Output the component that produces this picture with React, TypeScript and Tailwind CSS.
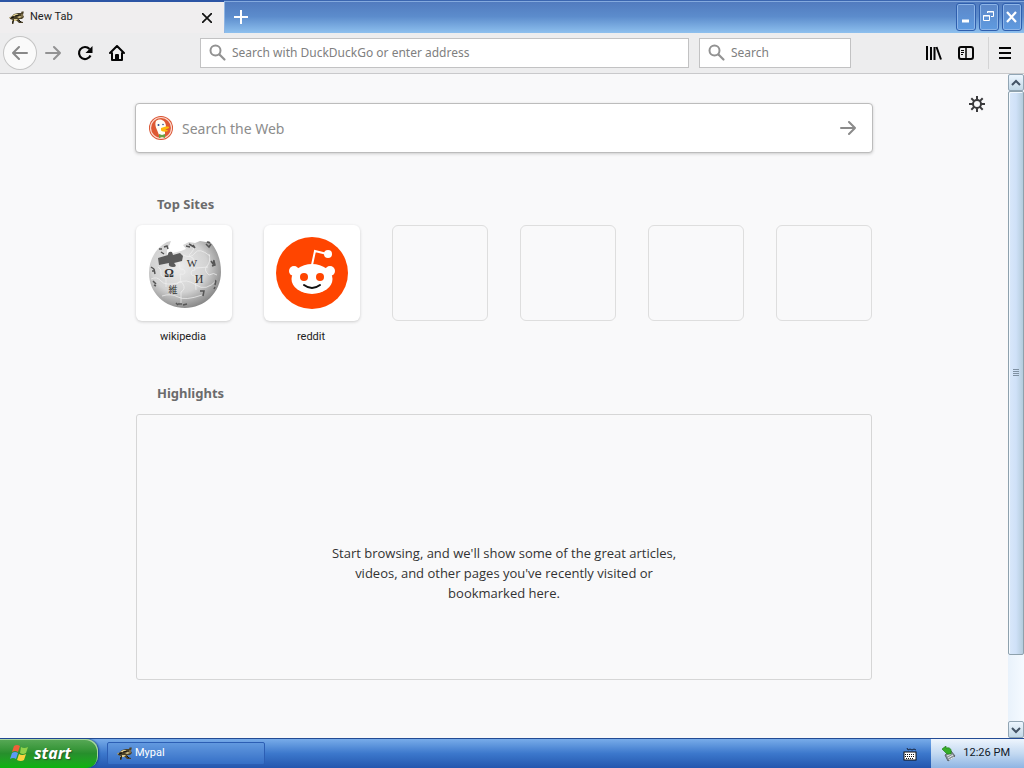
import type { ReactNode } from 'react'

const emptySites = [1, 2, 3, 4]

function RaccoonIcon() {
  return (
    <svg width="16" height="16" viewBox="0 0 16 16" aria-hidden="true">
      <path d="M1 8l2-2 2-2 4-1 3 0 1-2 1 1 1-1-1 4 1 2-2 2-3 0 1 2 3 1v1h-4l-2-2-3 0-1 2 1 1H3l0-2 1-2-3-1z" fill="#4b4128" />
      <path d="M3 6l3-2 4 0-3 2zM8 7l3-1 2 1-3 1zM5 9l4 0-2 2-2 0z" fill="#dccb8e" />
      <path d="M2 8l3-1M6 6l4-1M4 10l0 3M10 10l2 2" stroke="#12100c" fill="none" />
      <path d="M0 8l2-1M13 4v3M3 10l1 1" stroke="#a99867" fill="none" />
    </svg>
  )
}

function SearchIcon() {
  return (
    <svg width="18" height="18" viewBox="0 0 18 18" fill="none" stroke="#929292" aria-hidden="true">
      <circle cx="6.500" cy="6.500" r="5" strokeWidth="2" />
      <path d="M10.500 10.500l5 5" strokeWidth="2.200" strokeLinecap="round" />
    </svg>
  )
}

function DuckIcon() {
  return (
    <svg width="24" height="24" viewBox="0 0 24 24" aria-hidden="true">
      <circle cx="12" cy="12" r="12" fill="#d9512f" />
      <circle cx="12" cy="12" r="10.5" fill="#de5833" stroke="#fbd9cf" strokeWidth="1.2" />
      <path d="M7 5c1-1 4-2 6-1 3 1 4 4 4 7l-1 3 0 7c-2 1-4 1-5 .5L8 14C6 10 6 7 7 5z" fill="#fffdf5" />
      <path d="M12 12c3-1 6-2 8-1 1 1-3 2-4 3 2 0 3 0 3 1-2 1-7 1-7-1z" fill="#fdb90b" />
      <path d="M10 18l3 1 3-1v4l-3-1-3 1z" fill="#67a044" />
      <circle cx="9.500" cy="9" r="1" fill="#2d4f8e" />
      <circle cx="14" cy="8.500" r=".8" fill="#2d4f8e" />
    </svg>
  )
}

function WikipediaIcon() {
  return (
    <svg width="76" height="76" viewBox="0 0 76 76" aria-hidden="true">
      <defs>
        <radialGradient id="globe" cx="42%" cy="38%" r="65%">
          <stop offset="0" stopColor="#ececec" />
          <stop offset=".6" stopColor="#d2d2d2" />
          <stop offset="1" stopColor="#848484" />
        </radialGradient>
      </defs>
      <path d="M21 7l4-1-2 5-2 4 0 4 6-1 8-2 5-2-3-4 6-3 6 1 5-2 6 1 3-1 3 3c6 8 9 17 9 28C75 58 58 73 39 73 19 73 3 58 3 38 3 26 9 13 21 7z" fill="url(#globe)" />
      <path d="M12 23l10-3q0-4 4-3l1 3 7-2 3 3-1 5-8 2q4 4-1 4t-4-4l-10 2z" fill="#5b5b5b" />
      <path
        d="M12 32q4 2 3 6t5 5v9M33 27l1 7q5 0 5 3t-5 2l1 9M31 49q3-5 6 0t-2 8v13M47 10q2 5-2 8t2 5l2 12q-4 0-4 3t4 3l1 14M5 44q6-3 10 2t17 2q8-5 18 2t21-5M37 20q8 4 12-2t15 3M16 61q9-3 16 1t24-2M63 19q2 8-2 12t2 9q5-3 8 0M50 33l12-1"
        fill="none"
        stroke="#f0f0f0"
        strokeWidth=".7"
      />
      <g fill="#333" fontFamily="'Liberation Serif', 'Noto Sans CJK JP', serif" textAnchor="middle">
        <text x="23" y="42" fontSize="12" fontWeight="bold">Ω</text>
        <text x="46" y="32" fontSize="11">W</text>
        <text x="53" y="48" fontSize="12">И</text>
        <text x="27" y="58" fontSize="9">維</text>
      </g>
      <path
        d="M54 56l4 0-1 5M65 26l2 3 1-4M68 26l1 4-3 1M18 12l3-1 1 3M15 17l3 2M13 14l3 0M40 11l4 1M43 9l5 3M47 10l2 3M60 9l3 3 2-3M61 7l3 1M5 32l3 2M6 36l3 0M8 34l1 5M7 46l3 3M8 50l2 1M30 68l2 2M32 69h4M37 70l4-1M70 45l-1 5M69 52l-1 2"
        fill="none"
        stroke="#555"
        strokeWidth="1.500"
      />
    </svg>
  )
}

function RedditIcon() {
  return (
    <svg width="72" height="72" viewBox="0 0 72 72" aria-hidden="true">
      <circle cx="36" cy="36" r="36" fill="#ff4500" />
      <path d="M36 28l3-14 12 3" fill="none" stroke="#fff" strokeWidth="2" />
      <circle cx="52" cy="17" r="4" fill="#fff" />
      <circle cx="18" cy="34" r="5" fill="#fff" />
      <circle cx="54" cy="34" r="5" fill="#fff" />
      <ellipse cx="36" cy="42" rx="20.5" ry="15" fill="#fff" />
      <circle cx="28" cy="40" r="4" fill="#ff4500" />
      <circle cx="44" cy="40" r="4" fill="#ff4500" />
      <path d="M28 48q8 6 16 0" fill="none" stroke="#111" strokeWidth="2" strokeLinecap="round" />
    </svg>
  )
}

function GearIcon() {
  return (
    <svg width="16" height="16" viewBox="0 0 16 16" fill="none" stroke="#3a3a3c" aria-hidden="true">
      <circle cx="8" cy="8" r="4" strokeWidth="2" />
      <path d="M8 0v4M8 12v4M0 8h4M12 8h4M2.3 2.3l2.6 2.6M11.1 11.1l2.6 2.6M13.7 2.3l-2.6 2.6M4.9 11.1l-2.6 2.6" strokeWidth="2" />
    </svg>
  )
}

function ToolButton({ label, children }: { label: string; children: ReactNode }) {
  return (
    <button aria-label={label} className="flex size-8 shrink-0 items-center justify-center">
      {children}
    </button>
  )
}

function WindowButton({ label, children }: { label: string; children: ReactNode }) {
  return (
    <button
      aria-label={label}
      className="flex h-7 w-5 items-center justify-center rounded-[3px] border border-[#2f5fae] bg-linear-to-b from-[#5c87c8] to-[#5f9be0] shadow-[inset_0_0_0_1px_#8db5e8]"
    >
      <svg width="16" height="16" viewBox="0 0 16 16" fill="none" stroke="#fff" aria-hidden="true">
        {children}
      </svg>
    </button>
  )
}

function TitleBar() {
  return (
    <header className="flex h-[33px] shrink-0 bg-linear-to-b from-[#5079bd] via-[#5c8ccc] to-[#8ec0ee]">
      <div className="mt-[2px] flex w-56 shrink-0 items-center bg-[#f0eeef] pr-[9px] pl-[9px] shadow-[0_-2px_#2c55a5]">
        <RaccoonIcon />
        <span className="ml-[5px] flex-1 font-['Roboto',sans-serif] text-[11px] text-[#222]">New Tab</span>
        <button aria-label="Close tab" className="flex size-4 items-center justify-center">
          <svg width="10" height="10" viewBox="0 0 10 10" stroke="#111" strokeWidth="1.7" aria-hidden="true">
            <path d="M0 0l10 10M10 0L0 10" />
          </svg>
        </button>
      </div>
      <div className="flex flex-1 items-center justify-between border-t border-[#3b66b0] shadow-[inset_0_1px_#84aade]">
        <button aria-label="New tab" className="flex h-8 w-8 items-center justify-center border-l border-[#8fb4e2]">
          <svg width="14" height="14" viewBox="0 0 14 14" stroke="#fff" strokeWidth="2" aria-hidden="true">
            <path d="M7 0v14M0 7h14" />
          </svg>
        </button>
        <div className="flex gap-[3px] pr-[2px] pb-px">
          <WindowButton label="Minimize">
            <path d="M4 12h7" strokeWidth="3" />
          </WindowButton>
          <WindowButton label="Restore">
            <path d="M2.5 6.5h6v5h-6zM2 7h7M6.500 4v-1.500h6v5H10M6 3h7" />
          </WindowButton>
          <WindowButton label="Close">
            <path d="M3 3l9 10M12 3L3 13" strokeWidth="2.2" />
          </WindowButton>
        </div>
      </div>
    </header>
  )
}

function Toolbar() {
  return (
    <nav className="flex h-[41px] shrink-0 items-center border-b border-[#c9c9cb] bg-[#ededee]">
      <div className="flex w-[200px] shrink-0 items-center pl-1">
        <button aria-label="Back" className="mr-px flex size-8 items-center justify-center rounded-full bg-[#fafafa] ring-1 ring-[#c4c4c4]">
          <svg width="16" height="16" viewBox="0 0 16 16" fill="none" stroke="#888" strokeWidth="2" strokeLinecap="round" strokeLinejoin="round" aria-hidden="true">
            <path d="M15 8H1M7 2L1 8l6 6" />
          </svg>
        </button>
        <ToolButton label="Forward">
          <svg width="16" height="16" viewBox="0 0 16 16" fill="none" stroke="#929293" strokeWidth="2" strokeLinecap="round" strokeLinejoin="round" aria-hidden="true">
            <path d="M1 8h14M9 2l6 6-6 6" />
          </svg>
        </ToolButton>
        <ToolButton label="Reload">
          <svg width="16" height="16" viewBox="0 0 16 16" fill="none" stroke="#050505" strokeWidth="2.2" aria-hidden="true">
            <path d="M12.500 4A6 6 0 1 0 13.500 10.500" />
            <path d="M15.500 1v7H8.500z" fill="#050505" stroke="none" />
          </svg>
        </ToolButton>
        <ToolButton label="Home">
          <svg width="16" height="16" viewBox="0 0 16 16" fill="none" stroke="#050505" strokeWidth="2" strokeLinejoin="round" strokeLinecap="round" aria-hidden="true">
            <path d="M1 8l7-7 7 7M3 8v7h10V8" />
            <path d="M7 15v-5h2v5" />
          </svg>
        </ToolButton>
      </div>
      <label className="flex h-[30px] flex-1 items-center border border-[#c2c2c3] bg-white pl-2">
        <SearchIcon />
        <input aria-label="Address" className="ml-[5px] min-w-0 flex-1 text-[12px] outline-none placeholder:text-[#808080]" placeholder="Search with DuckDuckGo or enter address" />
      </label>
      <label className="ml-2.5 flex h-[30px] w-[152px] items-center border border-[#c2c2c3] bg-white pl-2">
        <SearchIcon />
        <input aria-label="Search" className="ml-[5px] min-w-0 flex-1 text-[12px] outline-none placeholder:text-[#808080]" placeholder="Search" />
      </label>
      <div className="ml-[67px] flex items-center pr-[3px]">
        <ToolButton label="Library">
          <svg width="16" height="16" viewBox="0 0 16 16" fill="none" stroke="#050505" strokeWidth="2" aria-hidden="true">
            <path d="M1 1v14M5 2v13M8.500 2v13M10.500 2l4.500 12.500" />
          </svg>
        </ToolButton>
        <ToolButton label="Sidebars">
          <svg width="16" height="16" viewBox="0 0 16 16" fill="none" stroke="#050505" strokeWidth="2" aria-hidden="true">
            <rect x="1" y="2" width="14" height="12" rx="2" />
            <path d="M8 2v12" strokeWidth="1.500" />
            <path d="M3 5.500h3M3 7.500h3M3 9.500h2" strokeWidth="1" />
          </svg>
        </ToolButton>
        <div className="ml-1.5 h-8 border-l border-[#d4d4d5]" />
        <ToolButton label="Menu">
          <svg width="12" height="12" viewBox="0 0 12 12" stroke="#050505" strokeWidth="2" aria-hidden="true">
            <path d="M0 1h12M0 6h12M0 11h12" />
          </svg>
        </ToolButton>
      </div>
    </nav>
  )
}

function ScrollButton({ label, d }: { label: string; d: string }) {
  return (
    <button aria-label={label} className="flex h-[17px] shrink-0 items-center justify-center rounded-[2px] border border-[#91a5b4] bg-linear-to-b from-[#edf6ff] to-[#c2d8e7]">
      <svg width="10" height="8" viewBox="0 0 10 8" fill="none" stroke="#435365" strokeWidth="2" aria-hidden="true">
        <path d={d} />
      </svg>
    </button>
  )
}

function ScrollBar() {
  return (
    <div className="flex w-4 shrink-0 flex-col bg-linear-to-r from-[#e9f2fb] to-[#f5faff]">
      <ScrollButton label="Scroll up" d="M1 6l4-4 4 4" />
      <div className="flex flex-17 flex-col items-center justify-center gap-px rounded-[2px] border border-[#8ea1ad] bg-linear-to-r from-[#d9e8fa] via-[#cfe1f8] to-[#b5ccdc] shadow-[inset_1px_1px_#f2f9ff]">
        <div className="h-px w-1.5 bg-[#7f91a3]" />
        <div className="h-px w-1.5 bg-[#7f91a3]" />
        <div className="h-px w-1.5 bg-[#7f91a3]" />
        <div className="h-px w-1.5 bg-[#7f91a3]" />
      </div>
      <div className="flex-2" />
      <ScrollButton label="Scroll down" d="M1 2l4 4 4-4" />
    </div>
  )
}

function SiteLink({ name, children }: { name: string; children: ReactNode }) {
  return (
    <a href="#" className="flex flex-col items-center">
      <span className="flex aspect-square w-full items-center justify-center rounded-md bg-white shadow-[0_1px_3px_#ccc]">
        {children}
      </span>
      <span className="mt-2 pr-0.5 font-['Roboto',sans-serif] text-[11px] leading-4 text-[#222]">{name}</span>
    </a>
  )
}

function NewTabPage() {
  return (
    <main className="relative flex-1 overflow-hidden bg-[#f9f9fa] px-4 pt-[29px]">
      <button aria-label="Settings" className="absolute top-[22px] right-[23px]">
        <GearIcon />
      </button>

      <div className="mx-auto max-w-[736px]">
        <form className="-mx-px flex h-[50px] items-center rounded border border-[#bcbcbc] bg-white pr-4 pl-[13px] shadow-[0_1px_3px_#ccc]">
          <DuckIcon />
          <input aria-label="Search the Web" className="ml-[9px] min-w-0 flex-1 text-[14px] outline-none placeholder:text-[#8c8c8c]" placeholder="Search the Web" />
          <button type="button" aria-label="Go">
            <svg width="16" height="16" viewBox="0 0 16 16" fill="none" stroke="#8b8b8b" strokeWidth="2" strokeLinecap="round" strokeLinejoin="round" aria-hidden="true">
              <path d="M1 8h14M9 2l6 6-6 6" />
            </svg>
          </button>
        </form>

        <section className="mt-[41px]">
          <h2 className="pl-[21px] text-[13px] leading-5 font-bold text-[#6b6b6c]">Top Sites</h2>
          <div className="mt-[11px] grid grid-cols-6 gap-8">
            <SiteLink name="wikipedia">
              <WikipediaIcon />
            </SiteLink>
            <SiteLink name="reddit">
              <RedditIcon />
            </SiteLink>
            {emptySites.map((n) => (
              <div key={n} className="aspect-square self-start rounded-md border border-[#dedede]" />
            ))}
          </div>
        </section>

        <section className="mt-[38px]">
          <h2 className="pl-[21px] text-[13px] leading-5 font-bold text-[#6b6b6c]">Highlights</h2>
          <div className="mt-[11px] flex h-[266px] justify-center rounded-[3px] border border-[#d6d6d6] pt-32">
            <p className="w-[350px] text-center font-['Open_Sans',sans-serif] text-[13px] leading-5 text-[#333]">
              Start browsing, and we'll show some of the great articles, videos, and other pages you've recently visited or bookmarked here.
            </p>
          </div>
        </section>
      </div>
    </main>
  )
}

function Taskbar() {
  return (
    <footer className="flex h-[30px] shrink-0 items-stretch border-t border-[#234b94] bg-linear-to-b from-[#78ace9] via-[#3c78cc] to-[#2456ae]">
      <button className="flex w-[98px] items-center rounded-r-xl bg-linear-to-b from-[#58a957] via-[#278f2c] to-[#08b40b] pb-[2px] pl-[10px] shadow-[inset_-1px_1px_#a5d49e,1px_0_2px_#173f87]">
        <svg width="20" height="20" viewBox="0 0 20 20" aria-hidden="true">
          <path d="M4 3q3-2 6 0L8 9q-3-2-6 0z" fill="#ef6039" />
          <path d="M11 4q3 2 7 0l-2 6q-3 2-6 0z" fill="#8fd14a" />
          <path d="M2 10q3-2 6 0l-2 6q-3-2-6 0z" fill="#5b9af5" />
          <path d="M9 11q3 2 7 0l-2 6q-3 2-7 0z" fill="#f8d23f" />
        </svg>
        <span className="ml-1 text-[16px] font-bold text-white italic [text-shadow:1px_1px_1px_#285b28]">start</span>
      </button>
      <button className="my-[3px] ml-[9px] flex w-[158px] items-center gap-[2px] rounded-[2px] border border-[#2c5eb4] bg-linear-to-b from-[#6299df] to-[#356fc6] pl-[9px] font-['Roboto',sans-serif] text-[11px] text-white">
        <RaccoonIcon />
        Mypal
      </button>
      <div className="ml-auto flex w-7 items-center">
        <svg width="14" height="14" viewBox="0 0 14 14" aria-hidden="true">
          <path d="M4 1l1 2 2-1 2 1 2-1 2 1" fill="none" stroke="#17253d" />
          <rect x="1" y="5" width="12" height="8" fill="#fff" stroke="#111" />
          <path d="M2 7.500h10M2 9.500h10M3 11.500h8" stroke="#111" strokeDasharray="1 1" />
        </svg>
      </div>
      <div className="flex w-[93px] items-center justify-between bg-linear-to-b from-[#eef5fd] via-[#c3d9f1] to-[#8fb5e3] pr-3.5 pl-[10px]">
        <svg width="16" height="16" viewBox="0 0 16 16" aria-hidden="true">
          <path d="M4 9l6-4 4 5-7 5z" fill="#8b9399" stroke="#59646b" />
          <path d="M6 10l4-2M7 12l5-3M8 14l5-3" stroke="#e6eaec" />
          <path d="M1 3l4-3v2c4-1 6 1 5 6L6 8l-2-2z" fill="#36ad28" stroke="#17750f" strokeWidth=".6" />
        </svg>
        <time className="font-['Roboto',sans-serif] text-[11px] whitespace-nowrap text-[#101828]">12:26 PM</time>
      </div>
    </footer>
  )
}

export default function App() {
  return (
    <div className="flex h-screen flex-col overflow-hidden font-['Noto_Sans',sans-serif]">
      <TitleBar />
      <Toolbar />
      <div className="flex min-h-0 flex-1">
        <NewTabPage />
        <ScrollBar />
      </div>
      <Taskbar />
    </div>
  )
}
